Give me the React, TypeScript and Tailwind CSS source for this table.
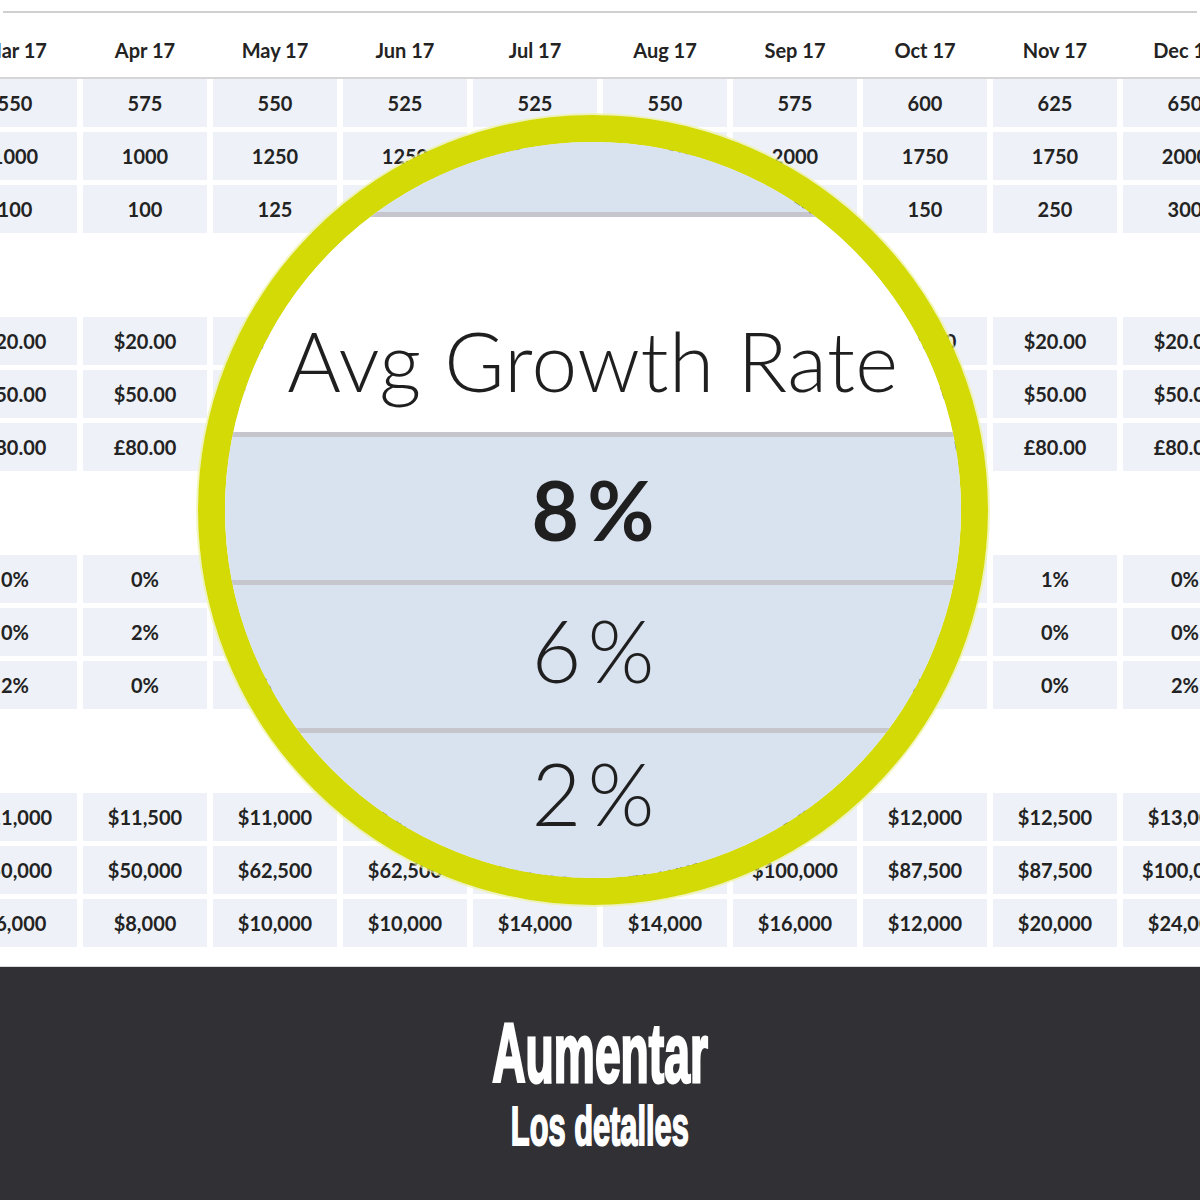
const months = ["Mar 17", "Apr 17", "May 17", "Jun 17", "Jul 17", "Aug 17", "Sep 17", "Oct 17", "Nov 17", "Dec 17"];

const groups: string[][][] = [
  [
    ["550", "575", "550", "525", "525", "550", "575", "600", "625", "650"],
    ["1000", "1000", "1250", "1250", "1500", "1750", "2000", "1750", "1750", "2000"],
    ["100", "100", "125", "125", "150", "150", "200", "150", "250", "300"],
  ],
  [
    Array(10).fill("$20.00"),
    Array(10).fill("$50.00"),
    Array(10).fill("£80.00"),
  ],
  [
    ["0%", "0%", "1%", "0%", "2%", "0%", "0%", "0%", "1%", "0%"],
    ["0%", "2%", "0%", "1%", "0%", "0%", "2%", "0%", "0%", "0%"],
    ["2%", "0%", "0%", "0%", "1%", "2%", "0%", "0%", "0%", "2%"],
  ],
  [
    ["$11,000", "$11,500", "$11,000", "$11,500", "$12,000", "$12,500", "$12,000", "$12,000", "$12,500", "$13,000"],
    ["$50,000", "$50,000", "$62,500", "$62,500", "$75,000", "$75,000", "$100,000", "$87,500", "$87,500", "$100,000"],
    ["$6,000", "$8,000", "$10,000", "$10,000", "$14,000", "$14,000", "$16,000", "$12,000", "$20,000", "$24,000"],
  ],
];

const Magnifier = () => (
  <div className="absolute left-[198px] top-[115px] w-[790px] h-[790px] rounded-full border-[27px] border-[#d3da06] overflow-hidden shadow-[0_0_0_2px_rgba(238,242,160,0.7)] font-['Lato',sans-serif] text-[#1f1f1f]">
    <div className="flex flex-col">
      <div className="h-[70px] bg-[#d9e2ef]" />
      <div className="h-[5px] bg-[#c6c5cb]" />
      <div className="h-[215px] bg-white flex items-start justify-center pt-[102px]">
        <p className="text-[82px] font-light leading-none tracking-[0.5px]">Avg Growth Rate</p>
      </div>
      <div className="h-[5px] bg-[#c6c5cb]" />
      <div className="h-[143px] bg-[#d9e2ef] flex items-center justify-center">
        <p className="text-[82px] font-bold leading-none tracking-[8px] pl-[8px]">8%</p>
      </div>
      <div className="h-[5px] bg-[#c6c5cb]" />
      <div className="h-[143px] bg-[#d9e2ef] flex items-center justify-center pb-[14px]">
        <p className="text-[86px] font-light leading-none tracking-[6px] pl-[6px]">6%</p>
      </div>
      <div className="h-[5px] bg-[#c6c5cb]" />
      <div className="h-[160px] bg-[#d9e2ef] flex items-start justify-center pt-[17px]">
        <p className="text-[86px] font-light leading-none tracking-[6px] pl-[6px]">2%</p>
      </div>
    </div>
  </div>
);

const App = () => {
  return (
    <div className="w-[1200px] h-[1200px] flex flex-col bg-white overflow-hidden">
      <div className="relative h-[967px] overflow-hidden font-['Lato',sans-serif] text-[#232323]">
        <div className="mt-[11px] mx-[3px] h-[2px] bg-[#d0d0d0]" />
        <div className="-ml-[47px] flex gap-[6px] h-[64px] pt-[10px] items-center">
          {months.map((m) => (
            <div key={m} className="w-[124px] shrink-0 text-center text-[20px] font-bold">
              {m}
            </div>
          ))}
        </div>
        <div className="h-[2px] bg-[#d6d6d6]" />
        <div className="flex flex-col gap-[84px]">
          {groups.map((rows, gi) => (
            <div key={gi} className="flex flex-col gap-[5px]">
              {rows.map((row, ri) => (
                <div key={ri} className="-ml-[47px] flex gap-[6px]">
                  {row.map((v, ci) => (
                    <div
                      key={ci}
                      className="w-[124px] h-[48px] shrink-0 bg-[#eef2f8] flex items-center justify-center text-[20px] font-bold"
                    >
                      {v}
                    </div>
                  ))}
                </div>
              ))}
            </div>
          ))}
        </div>
        <div className="absolute left-0 right-0 bottom-0 h-[1px] bg-[#d9d9d9]" />
        <Magnifier />
      </div>
      <div className="flex-1 bg-[#313035] flex flex-col items-center text-white font-['Liberation_Sans',Arial,sans-serif] font-bold">
        <p className="mt-[44px] text-[84px] leading-none scale-x-[0.55] [-webkit-text-stroke:3px_white]">Aumentar</p>
        <p className="mt-[3px] text-[56px] leading-none scale-x-[0.55] [-webkit-text-stroke:2px_white]">Los detalles</p>
      </div>
    </div>
  );
};

export default App;
